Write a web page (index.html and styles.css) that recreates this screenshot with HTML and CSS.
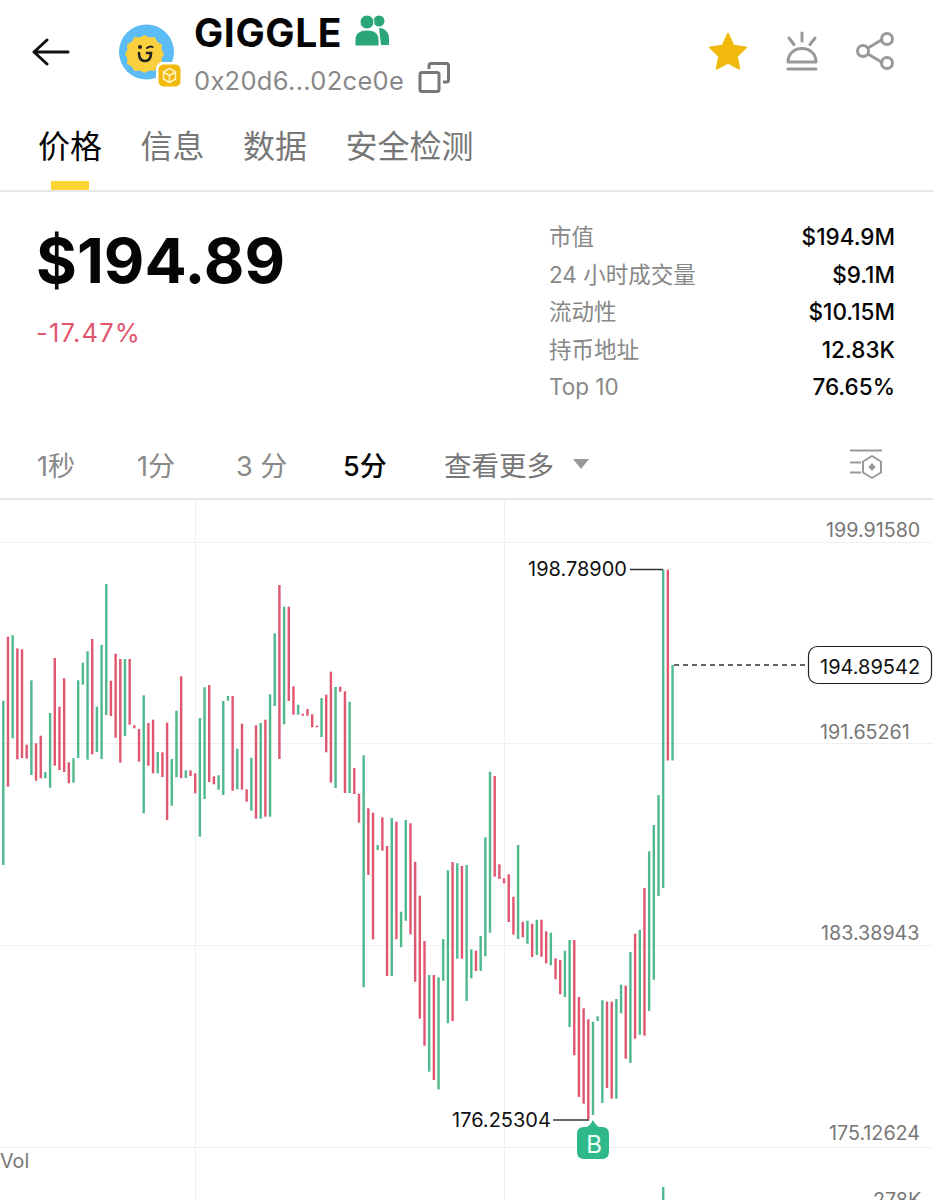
FILE: index.html
```html
<!DOCTYPE html>
<html lang="zh-CN">
<head>
    <meta charset="UTF-8">
    <meta name="viewport" content="width=device-width, initial-scale=1.0">
    <title>GIGGLE</title>
    <link rel="stylesheet" href="styles.css">
</head>
<body>
    <header class="top">
        <svg class="back" width="38" height="28" viewBox="0 0 38 28">
            <path d="M36 14H2M15 2L2 14l13 12" fill="none" stroke="#111" stroke-width="3" stroke-linecap="round" stroke-linejoin="round"/>
        </svg>
        <div class="avatar">
            <svg width="66" height="66" viewBox="0 0 66 66">
                <circle cx="27.500" cy="28" r="27.500" fill="#5cbcf5"/>
                <path d="M25.500 12l4.500 2.500 5-.5 2.500 4.500 4.500 2.500-.5 5 2.500 4-2.500 4.500.5 5-4.500 2.500-2.500 4-5-.5-4.500 2.500-4.500-2.500-5 .5-2.500-4-4.500-2.500.5-5-2.500-4.500 2.500-4-.5-5 4.500-2.500 2.500-4.500 5 .5z" fill="#fbd03f" stroke="#fbd03f" stroke-width="2" stroke-linejoin="round"/>
                <circle cx="21" cy="23" r="2" fill="#222"/>
                <path d="M28 24q3-2.500 5.500-1" fill="none" stroke="#222" stroke-width="2" stroke-linecap="round"/>
                <path d="M20 29q0 8 6 8t6-8h-4" fill="none" stroke="#222" stroke-width="2.600" stroke-linecap="round"/>
                <rect x="37" y="38" width="27" height="27" rx="7" fill="#fff"/>
                <rect x="39.500" y="40.500" width="22" height="22" rx="5" fill="#f0b90b"/>
                <path d="M50.500 44.500l6 3.500v7l-6 3.500-6-3.500v-7zM44.500 48l6 3.500 6-3.500M50.500 51.500v7" fill="none" stroke="#fff3c4" stroke-width="1.500" stroke-linejoin="round"/>
            </svg>
        </div>
        <div class="token">
            <div class="token-name">
                GIGGLE
                <svg class="people" width="34" height="31" viewBox="0 0 34 31">
                    <circle cx="24" cy="6" r="5.500" fill="#2ba678"/>
                    <path d="M24 13c6 0 10 5 10 10v7h-8z" fill="#2ba678"/>
                    <circle cx="12" cy="7" r="7" fill="#2ba678" stroke="#fff" stroke-width="1"/>
                    <path d="M0 31v-6c0-7 5-10 12-10s12 3 12 10v6z" fill="#2ba678" stroke="#fff" stroke-width="1"/>
                </svg>
            </div>
            <div class="token-addr">
                0x20d6...02ce0e
                <svg class="copy" width="32" height="31" viewBox="0 0 32 31">
                    <rect x="2" y="10.500" width="19" height="19" rx="2" fill="none" stroke="#777" stroke-width="3"/>
                    <path d="M11 7V3.500A2 2 0 0 1 13 1.500h15.500a2 2 0 0 1 2 2V18a2 2 0 0 1-2 2H25" fill="none" stroke="#777" stroke-width="3"/>
                </svg>
            </div>
        </div>
        <div class="actions">
            <svg width="42" height="40" viewBox="0 0 42 40">
                <path d="M21 3l5.500 11.800 12.500 1.600-9.200 8.800 2.400 12.400L21 31.500l-11.200 6.100 2.400-12.400L3 16.400l12.500-1.600z" fill="#f0b90b" stroke="#f0b90b" stroke-width="2" stroke-linejoin="round"/>
            </svg>
            <svg width="34" height="40" viewBox="0 0 34 40">
                <path d="M17 2v8M4 7l5 6.500M30 7l-5 6.500M3 31c0-8 6-13.500 14-13.500S31 23 31 31zM3 38h28" fill="none" stroke="#999" stroke-width="3" stroke-linecap="round" stroke-linejoin="round"/>
            </svg>
            <svg width="40" height="40" viewBox="0 0 40 40">
                <path d="M13 17l15-9M13 23l15 9" stroke="#999" stroke-width="3"/>
                <g fill="none" stroke="#999" stroke-width="3">
                    <circle cx="32" cy="8" r="5.500"/>
                    <circle cx="8" cy="20" r="5.500"/>
                    <circle cx="32" cy="32" r="5.500"/>
                </g>
            </svg>
        </div>
    </header>

    <nav class="tabs">
        <a class="tab active">价格</a>
        <a class="tab">信息</a>
        <a class="tab">数据</a>
        <a class="tab">安全检测</a>
    </nav>

    <section class="stats">
        <div class="price">
            <div class="price-value">$194.89</div>
            <div class="price-change">-17.47%</div>
        </div>
        <div class="stat-list">
            <div class="stat-row"><span>市值</span><b>$194.9M</b></div>
            <div class="stat-row"><span>24 小时成交量</span><b>$9.1M</b></div>
            <div class="stat-row"><span>流动性</span><b>$10.15M</b></div>
            <div class="stat-row"><span>持币地址</span><b>12.83K</b></div>
            <div class="stat-row"><span>Top 10</span><b>76.65%</b></div>
        </div>
    </section>

    <div class="intervals">
        <a class="interval">1秒</a>
        <a class="interval">1分</a>
        <a class="interval">3 分</a>
        <a class="interval active">5分</a>
        <a class="interval more">查看更多<i class="caret"></i></a>
        <svg class="chart-settings" width="36" height="32" viewBox="0 0 36 32">
            <path d="M2 2.500h32M2 14.500h11M2 24.500h11" stroke="#999" stroke-width="2"/>
            <path d="M24 8l9 5.500v11L24 30l-9-5.500v-11z" fill="none" stroke="#999" stroke-width="2" stroke-linejoin="round"/>
            <path d="M24 15l3.500 4-3.500 4-3.500-4z" fill="#999"/>
        </svg>
    </div>

    <div class="chart">
        <svg id="chart" width="933" height="700" viewBox="0 500 933 700">
            <g class="grid">
                <path d="M0 542.500H933M0 743.500H933M0 945.500H933M0 1147.500H933M195.500 500V1200M504.500 500V1200"/>
            </g>
            <g id="bars"></g>
            <rect x="662" y="1187" width="2.400" height="13" fill="#4fb88d"/>

            <text class="axis" x="826" y="537">199.91580</text>
            <text class="axis" x="820" y="739">191.65261</text>
            <text class="axis" x="821" y="940">183.38943</text>
            <text class="axis" x="829" y="1140">175.12624</text>
            <text class="axis" x="873" y="1207">278K</text>
            <text class="axis" x="0" y="1168">Vol</text>

            <text class="mark" x="528" y="576">198.78900</text>
            <path class="leader" d="M630 569.500H663"/>
            <text class="mark" x="452" y="1127">176.25304</text>
            <path class="leader" d="M553 1120H589"/>

            <path class="last-line" d="M674 665H808"/>
            <rect class="last-box" x="808.500" y="646.500" width="123" height="37" rx="9"/>
            <text class="mark" x="820" y="674">194.89542</text>

            <path d="M593 1120c1.500 3 3 5 6 7h3q7 0 7 7v18q0 7-7 7h-18q-7 0-7-7v-18q0-7 7-7h3c3-2 4.500-4 6-7z" fill="#2fb98a"/>
            <text class="buy" x="594" y="1153">B</text>
        </svg>
    </div>

    <script>
        // type, top, bottom for every 5 min bar, left to right
        const bars = [
            ['g',700.7,865],['r',636.7,786.7],['g',635.3,738.3],['r',648.3,759.3],['r',649.3,758],['r',744.7,758.7],['g',680.3,775],['r',743.3,780.7],
            ['r',735.7,778.3],['g',772,778.3],['g',713,787.7],['r',658,765.7],['r',706.7,770],['r',678.3,772],['r',762.3,783.3],['g',758.3,782.7],
            ['g',680.3,758],['g',662.7,684.7],['g',651.3,759.7],['r',639,754.3],['g',706.7,752],['g',645,759],['g',584,715],['r',680.7,716],
            ['r',653.7,737.7],['r',659,762.7],['g',659,736],['r',659,724.7],['r',725.3,728.3],['r',729,761.7],['g',695.3,813.3],['r',723,765.7],
            ['r',719.7,773.3],['g',752,773.3],['r',752.3,777],['r',722.7,820],['g',759,805.7],['g',710.7,777.3],['r',676.3,778],['g',770.3,778],
            ['r',770.3,776],['r',773.3,793.3],['g',718,836.7],['g',687.3,799],['r',685,782],['r',776.3,784.3],['g',775.3,789.7],['g',701,795],
            ['g',696,700.7],['r',696,790.7],['g',748.7,789.3],['r',723.7,789.7],['r',789.3,801.7],['g',757.7,810.7],['r',725.3,818.7],['g',723,818.7],
            ['r',719.7,816.7],['g',694.3,816.7],['g',633.3,706],['r',585,759],['g',606.7,724.3],['r',606.7,701],['r',686.3,714.7],['g',704.7,714.7],
            ['r',713.7,715.7],['r',709,715.7],['r',714.3,727.3],['r',725.7,727.3],['g',698,737],['r',694.7,752.3],['r',671.7,782.7],['g',687,788],
            ['r',686.7,691.7],['r',691.3,793],['g',701.7,793],['r',768,794],['r',793.7,822.7],['g',755.3,987.3],['r',808.3,875],['r',812.7,939.3],
            ['g',845,850],['r',817.3,850.7],['r',846,976],['g',818,976],['r',821.7,939.3],['g',911.7,947.3],['g',820,920.7],['r',823.3,934.3],
            ['r',861.7,981.7],['r',895.7,1018.7],['r',941,1045.7],['g',975,1071.7],['r',975,1080],['g',977.3,1089.3],['g',939,980.7],['g',870.3,1023.3],
            ['r',862,1021],['g',863.3,958.7],['r',866,958.7],['g',865,1001],['g',949.3,978.3],['r',950.7,971],['g',936,971],['g',837.3,956.3],
            ['g',771.7,932.7],['r',776,876.7],['r',864.3,879],['r',878.3,883.3],['r',874.3,922],['r',896.7,934.7],['g',845,939],['r',921.7,937.3],
            ['g',920.7,943.7],['r',923.7,957],['g',919.7,955],['r',919.7,956.7],['r',931.3,963.3],['g',932.7,965.3],['r',958.3,979.3],['r',960,994.3],
            ['g',950.7,997],['g',940,1027],['r',940,1055.3],['r',997,1097],['r',1008.3,1103.7],['r',1019.3,1119.3],['g',1021.7,1115],['g',1016.3,1021],
            ['g',1000.3,1103],['r',1001.7,1088],['r',1001.7,1098.7],['g',999,1098.7],['g',984.7,1013.3],['r',985.7,1058.7],['g',952,1063],['r',933.7,1038.7],
            ['g',930,1034.7],['r',888,1035.7],['g',851.3,1011],['g',825,979.7],['g',795,896],['g',569.7,888],['r',569.7,760.5],['g',665,760.5]
        ];

        const group = document.getElementById('bars');
        bars.forEach(function(bar, i) {
            const rect = document.createElementNS('http://www.w3.org/2000/svg', 'rect');
            rect.setAttribute('x', 2.1 + i * 4.68);
            rect.setAttribute('y', bar[1]);
            rect.setAttribute('width', 2.4);
            rect.setAttribute('height', bar[2] - bar[1]);
            rect.setAttribute('class', bar[0] === 'g' ? 'up' : 'down');
            group.appendChild(rect);
        });
    </script>
</body>
</html>
```

FILE: styles.css
```css
* {
    box-sizing: border-box;
}

body {
    margin: 0;
    background: #fff;
    color: #050505;
    font-family: 'Inter', 'Noto Sans CJK SC', sans-serif;
    height: 1200px;
    overflow: hidden;
}

.top {
    display: flex;
    align-items: flex-start;
    height: 110px;
    padding-left: 32px;
}

.back {
    margin-top: 38px;
}

.avatar {
    margin: 24px 0 0 49px;
    width: 66px;
    height: 66px;
}

.token {
    margin-left: 9px;
}

.token-name {
    display: flex;
    align-items: flex-start;
    height: 48px;
    padding-top: 10px;
    font-size: 39px;
    line-height: 46px;
    font-weight: 700;
    letter-spacing: 0.6px;
}

.people {
    margin: 5px 0 0 13px;
}

.token-addr {
    display: flex;
    align-items: center;
    height: 48px;
    margin-top: 8px;
    font-size: 25.500px;
    letter-spacing: 0.3px;
    color: #888;
}

.copy {
    margin: -6px 0 0 14px;
}

.actions {
    display: flex;
    align-items: center;
    margin: 31px 0 0 auto;
    padding-right: 38px;
    gap: 36px;
}

.tabs {
    display: flex;
    gap: 38.500px;
    height: 82px;
    padding-left: 38px;
    border-bottom: 2px solid #e8e8e8;
}

.tab {
    position: relative;
    font-size: 32px;
    line-height: 74px;
    color: #777;
}

.tab.active {
    color: #050505;
}

.tab.active::after {
    content: "";
    position: absolute;
    left: 13px;
    bottom: 0;
    width: 38px;
    height: 9px;
    background: #fcd535;
}

.stats {
    display: flex;
    justify-content: space-between;
    height: 238px;
    padding: 26px 38px 0 36px;
}

.price-value {
    margin-top: 4px;
    font-size: 62.500px;
    line-height: 76px;
    font-weight: 700;
    letter-spacing: 0;
}

.price-change {
    margin-top: 20px;
    font-size: 25.500px;
    line-height: 30px;
    color: #e0566f;
    letter-spacing: 1.2px;
}

.stat-list {
    width: 346px;
}

.stat-row {
    display: flex;
    justify-content: space-between;
    height: 37.500px;
    line-height: 37.500px;
    font-size: 22.500px;
    color: #888;
}

.stat-row b {
    font-weight: 500;
    color: #050505;
    font-size: 22.500px;
}

.intervals {
    display: grid;
    grid-template-columns: 100px 99px 107px 101px 1fr auto;
    align-items: center;
    height: 70px;
    padding-left: 37px;
    border-bottom: 2px solid #e6e6e6;
}

.interval {
    font-size: 27px;
    color: #888;
}

.interval.active {
    color: #050505;
    font-weight: 500;
}

.interval.more {
    display: flex;
    align-items: center;
    font-size: 27.500px;
    color: #777;
}

.caret {
    width: 0;
    height: 0;
    margin-left: 19px;
    border-left: 8px solid transparent;
    border-right: 8px solid transparent;
    border-top: 10px solid #999;
}

.chart-settings {
    margin-right: 49px;
}

.chart {
    height: 700px;
}

#chart {
    display: block;
}

.grid path {
    fill: none;
    stroke: #f0f0f0;
    stroke-width: 1;
}

.up {
    fill: #4fb88d;
}

.down {
    fill: #e0566f;
}

.axis {
    font-size: 19.700px;
    fill: #777;
}

.mark {
    font-size: 20px;
    fill: #111;
}

.leader {
    fill: none;
    stroke: #333;
    stroke-width: 1.500;
}

.last-line {
    fill: none;
    stroke: #333;
    stroke-width: 1.500;
    stroke-dasharray: 5 4;
}

.last-box {
    fill: #fff;
    stroke: #222;
    stroke-width: 1.200;
}

.buy {
    font-size: 24px;
    fill: #e8fff6;
    text-anchor: middle;
}
```
